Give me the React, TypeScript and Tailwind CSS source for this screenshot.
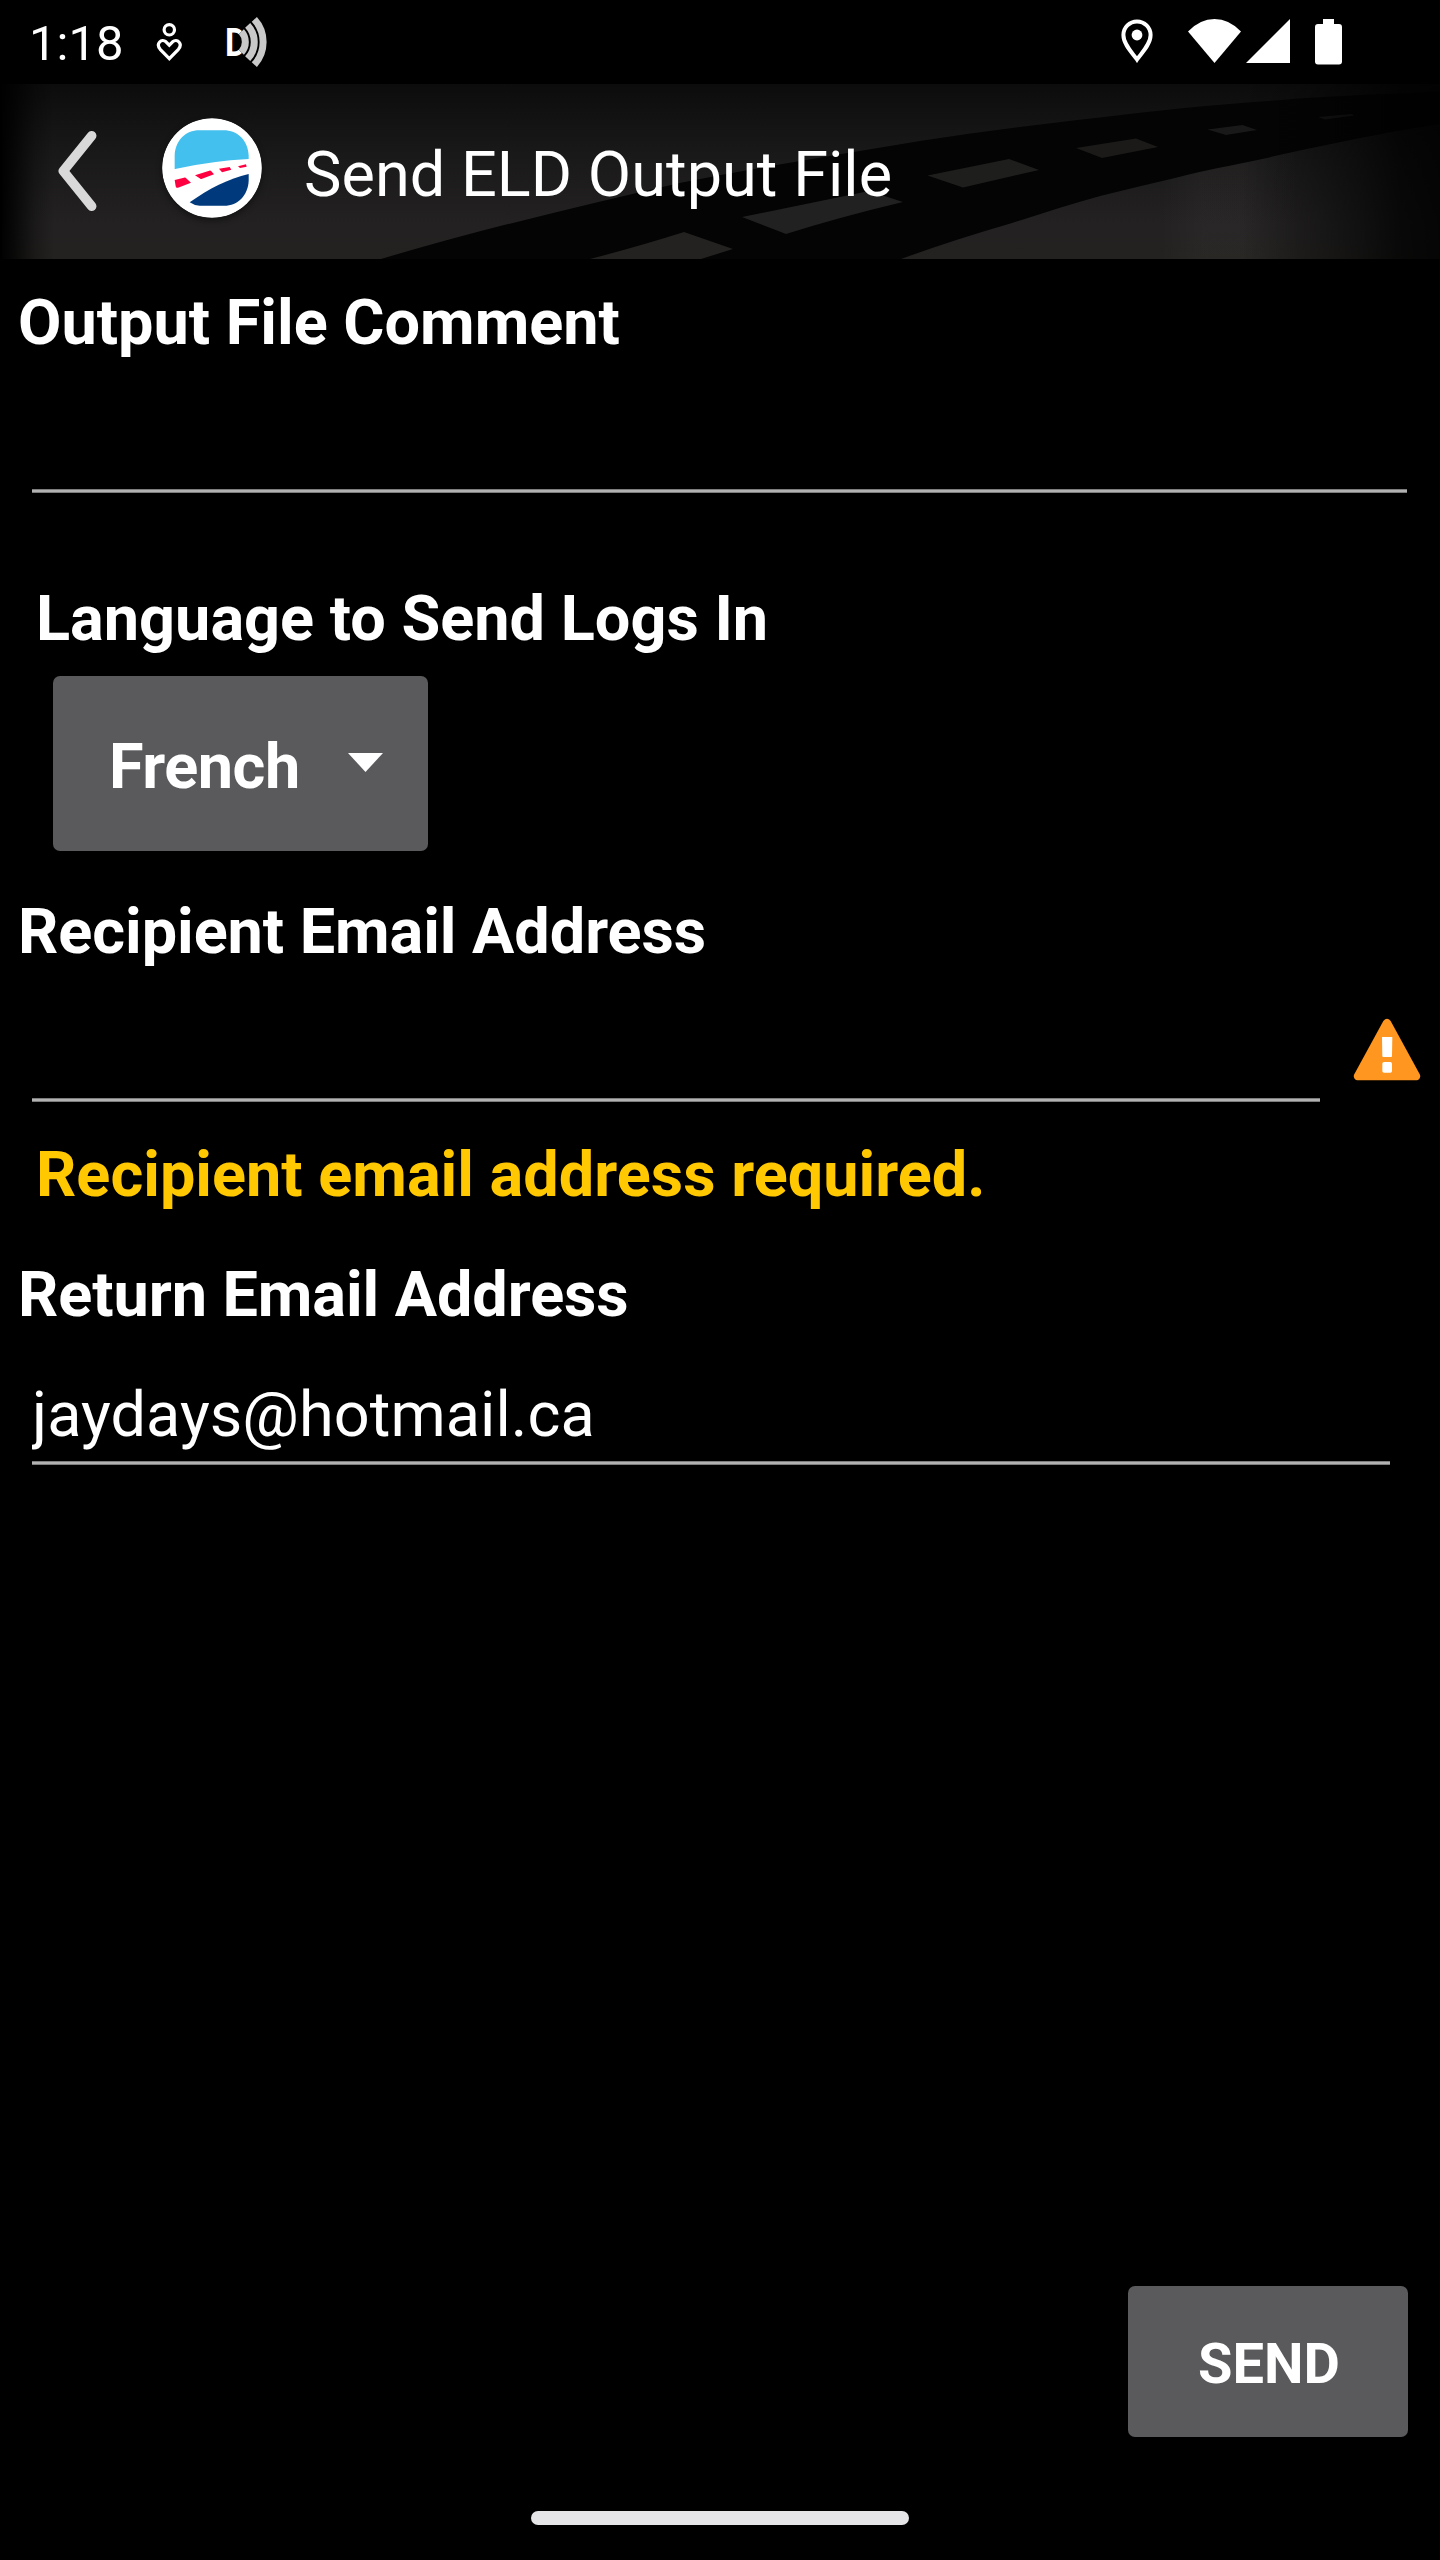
import React, { useState } from 'react';

const App: React.FC = () => {
  const [comment, setComment] = useState('');
  const [recipient, setRecipient] = useState('');
  const [returnEmail, setReturnEmail] = useState('jaydays@hotmail.ca');

  return (
    <div className="w-[1440px] h-[2560px] bg-black text-white flex flex-col overflow-hidden font-['Roboto',sans-serif] text-[63px] leading-[74px]">
      <StatusBar />
      <Header title="Send ELD Output File" />

      <main className="flex-1 flex flex-col items-start">
        <Label className="mt-[27px] ml-[18px]">Output File Comment</Label>
        <div className="w-full pl-8 pr-[33px]">
          <Field className="h-[133px] w-full" value={comment} onChange={setComment} />
        </div>

        <Label className="mt-[89px] ml-9">Language to Send Logs In</Label>
        <button className="mt-5 ml-[53px] w-[375px] h-[175px] rounded-[7px] bg-[#5a5a5c] flex items-center pl-14 pt-1.5 font-bold">
          <span className="w-[192px] text-left tracking-[-0.5px]">French</span>
          <svg className="ml-[47px] mb-2 w-[35px] h-[19px]" viewBox="0 0 35 19">
            <path d="M0 0h35L17.5 19z" fill="#fff" />
          </svg>
        </button>

        <Label className="mt-11 ml-[18px] tracking-[-0.06px]">Recipient Email Address</Label>
        <div className="w-full flex pl-8 pr-[19px]">
          <Field className="h-[133px] w-[1288px]" value={recipient} onChange={setRecipient} />
          <WarningIcon />
        </div>
        <p className="mt-9 ml-9 font-bold text-[#ffc800]">Recipient email address required.</p>

        <Label className="mt-[46px] ml-[18px] tracking-[-0.08px]">Return Email Address</Label>
        <div className="w-full mt-[46px] pl-8 pr-[50px]">
          <Field className="h-[87px] w-full tracking-[0.06px]" value={returnEmail} onChange={setReturnEmail} />
        </div>
      </main>

      <div className="flex justify-end pr-8">
        <button className="w-[280px] h-[151px] rounded-[7px] bg-[#5a5a5c] text-[56px] font-bold pt-1 pl-0.5">SEND</button>
      </div>
      {/* Gesture bar */}
      <div className="h-[123px] pt-[74px] flex justify-center">
        <div className="w-[378px] h-3.5 rounded-full bg-[#e6e6e9]" />
      </div>
    </div>
  );
};

const Label: React.FC<{ className: string; children: React.ReactNode }> = ({ className, children }) => (
  <label className={`block font-bold whitespace-nowrap ${className}`}>{children}</label>
);

const Field: React.FC<{ className: string; value: string; onChange: (v: string) => void }> = ({ className, value, onChange }) => (
  <div className={`relative shrink-0 ${className}`}>
    <input
      className="block w-full h-[74px] bg-transparent outline-none"
      value={value}
      onChange={(e) => onChange(e.target.value)}
    />
    {/* Underline */}
    <div className="absolute bottom-0 inset-x-0 h-1 bg-[#b2b2b2] border-y border-[#7d7d7d]" />
  </div>
);

const StatusBar: React.FC = () => (
  <div className="h-[84px] shrink-0 flex items-start">
    <span className="ml-[29px] mt-[15px] w-[127px] text-[49px] leading-[58px]">1:18</span>
    <svg className="mt-[23px] w-7 h-[39px]" viewBox="0 0 28 39" fill="none" stroke="#fff" strokeWidth="3.2">
      <circle cx="13.3" cy="6.8" r="5.2" />
      <path d="M13.3 35.6L4.2 26.3C-.6 20.6 5.6 15 10 18.8L13.3 22.2 16.6 18.8C21 15 27.2 20.6 22.4 26.3z" />
    </svg>
    <svg className="ml-[43px] mt-[18px] w-[41px] h-[49px] overflow-visible" viewBox="0 0 123 147" fill="none">
      <text x="-6" y="113" fontSize="117" fontWeight="bold" fill="#fff" textLength="66" lengthAdjust="spacingAndGlyphs">D</text>
      <path d="M43 41A46 46 0 0 1 43 103" strokeWidth="34" stroke="#000" />
      <g strokeWidth="21" stroke="#c9c9c9">
        <path d="M43 41A46 46 0 0 1 43 103" />
        <path d="M62 22A73 73 0 0 1 62 122" />
        <path d="M82 4A101 101 0 0 1 82 140" />
      </g>
    </svg>

    <svg className="ml-auto mt-[19px] w-8 h-11" viewBox="0 0 32 44">
      <path d="M16 2.4C8.5 2.4 2.4 8.4 2.4 16 2.4 25.5 12 34.5 16 40.5 20 34.5 29.6 25.5 29.6 16 29.6 8.4 23.5 2.4 16 2.4z" fill="none" stroke="#fff" strokeWidth="4" />
      <circle cx="16" cy="16" r="5.4" fill="#fff" />
    </svg>
    <svg className="ml-[35px] mt-[19px] w-[53px] h-11" viewBox="0 0 53 44">
      <path d="M0 12.5Q12 0 26.5 0T53 12.5L26.5 44z" fill="#fff" />
    </svg>
    <svg className="ml-[5px] mt-[19px] w-11 h-11" viewBox="0 0 44 44">
      <path d="M0 44H44V0z" fill="#fff" />
    </svg>
    <svg className="ml-[25px] mr-[98px] mt-[19px] w-[27px] h-[46px]" viewBox="0 0 27 46" fill="#fff">
      <path d="M8 0h11v5h5q3 0 3 3v34.5q0 3-3 3H3q-3 0-3-3V8q0-3 3-3h5z" />
    </svg>
  </div>
);

const Header: React.FC<{ title: string }> = ({ title }) => (
  <header className="relative h-[175px] shrink-0">
    <RoadBackground />
    <div className="relative h-full flex items-start">
      <svg className="ml-[57px] mt-[46px] w-10 h-[82px]" viewBox="0 0 40 82">
        <path d="M34.7 5.7L6.3 41 34.7 76.3" fill="none" stroke="#d9d9d9" strokeWidth="9.5" strokeLinecap="round" strokeLinejoin="round" />
      </svg>
      <Logo />
      <h1 className="ml-[42px] mt-[54px] whitespace-nowrap tracking-[0.04px]">{title}</h1>
    </div>
  </header>
);

const Logo: React.FC = () => (
  <svg className="ml-[65px] mt-[33.5px] w-[100px] h-[100px] rounded-full shadow-[0_3px_6px_rgba(0,0,0,0.4)]" viewBox="0 0 300 300">
    <circle cx="150" cy="150" r="149.5" fill="#fff" />
    <path d="M38 153V112C40 68 70 37 112 37H184C228 37 258 68 260 112V123Q150 129 43 152Q38 154 38 153z" fill="#44c0ee" />
    <path d="M260 170V188C258 232 228 263 186 263H113Q95 262 83 253C140 212 200 182 260 168z" fill="#003a7d" />
    <g fill="#ff0040">
      <path d="M38 186L66 179Q71 178 74 182L87 194 48 209Q42 211 41 205z" />
      <path d="M99 172L142 158Q146 157 148 160L156 169 120 182Q116 184 113 181z" />
      <path d="M171 152L203 147 208 155 180 163z" />
      <path d="M228 145L252 139 254 146 234 150z" />
    </g>
  </svg>
);

// Highway that fades out towards the right edge
const RoadBackground: React.FC = () => (
  <svg className="absolute inset-0 w-full h-full" viewBox="0 84 1440 175" preserveAspectRatio="none">
    <defs>
      <linearGradient id="sky" x1="0" y1="0" x2="0" y2="1">
        <stop offset="0" stopColor="#0c0c0c" />
        <stop offset="0.4" stopColor="#1a1919" />
        <stop offset="0.8" stopColor="#232122" />
        <stop offset="1" stopColor="#232220" />
      </linearGradient>
      <linearGradient id="left" x1="0" y1="0" x2="1" y2="0">
        <stop offset="0" stopColor="#000" />
        <stop offset="0.25" stopColor="#000" stopOpacity="0.75" />
        <stop offset="0.65" stopColor="#000" stopOpacity="0.25" />
        <stop offset="1" stopColor="#000" stopOpacity="0" />
      </linearGradient>
      <linearGradient id="glow" x1="0" y1="0" x2="1" y2="0">
        <stop offset="0" stopColor="#fff8e8" stopOpacity="0" />
        <stop offset="0.3" stopColor="#fff8e8" stopOpacity="0.026" />
        <stop offset="0.6" stopColor="#fff8e8" stopOpacity="0.026" />
        <stop offset="1" stopColor="#fff8e8" stopOpacity="0" />
      </linearGradient>
      <linearGradient id="right" x1="0" y1="0" x2="1" y2="0">
        <stop offset="0" stopColor="#000" stopOpacity="0" />
        <stop offset="0.3" stopColor="#000" stopOpacity="0.2" />
        <stop offset="0.6" stopColor="#000" stopOpacity="0.5" />
        <stop offset="0.8" stopColor="#000" stopOpacity="0.75" />
        <stop offset="1" stopColor="#000" stopOpacity="0.84" />
      </linearGradient>
    </defs>
    <rect x="2" y="84" width="1438" height="175" fill="url(#sky)" />
    <rect x="1160" y="150" width="140" height="109" fill="url(#glow)" />
    <path
      d="M381 259C478 230 580 206 681 182.7C760 167 842 154 920 141C980 132 1040 124 1098 117.7C1155 111 1210 105 1266 101.3C1310 97 1380 94 1440 92V124C1400 130 1370 136 1337 142.7Q1300 150 1262 159C1230 166 1205 170 1176 177.7Q1140 186 1101 195.7C1070 204 1040 214 1012 223Q950 241 901 259z"
      fill="#040404"
    />
    <g>
      <path d="M590 259Q640 246 684 232L733 249 701 259z" fill="#232220" />
      <path d="M742 217L869 191 903 202Q840 217 786 234z" fill="#222121" />
      <path d="M927.5 175.5L1009 159 1039 170 963 187.5z" fill="#1e1e1d" />
      <path d="M1076 148L1136 138.5 1158 147 1102 158z" fill="#1b1a19" />
      <path d="M1207.5 129.5L1242.5 125 1257 130 1226 135z" fill="#191919" />
      <path d="M1318 117L1352 114 1354 115.5 1325 119.5z" fill="#151515" />
    </g>
    <rect x="0" y="84" width="54" height="175" fill="url(#left)" />
    <rect x="1240" y="84" width="200" height="175" fill="url(#right)" />
  </svg>
);

const WarningIcon: React.FC = () => (
  <svg className="ml-auto mt-[49px] w-[68px] h-[63px] shrink-0" viewBox="0 0 204 189">
    <path d="M91 9Q102-4 113 9L201 170Q204 182 192 187H12Q0 182 3 170z" fill="#ff961f" />
    <path d="M87 57H118L117 115Q117 117 114 117H91Q88 117 88 115z" fill="#fff" />
    <rect x="88" y="132" width="29" height="32" rx="5" fill="#fff" />
  </svg>
);

export default App;
